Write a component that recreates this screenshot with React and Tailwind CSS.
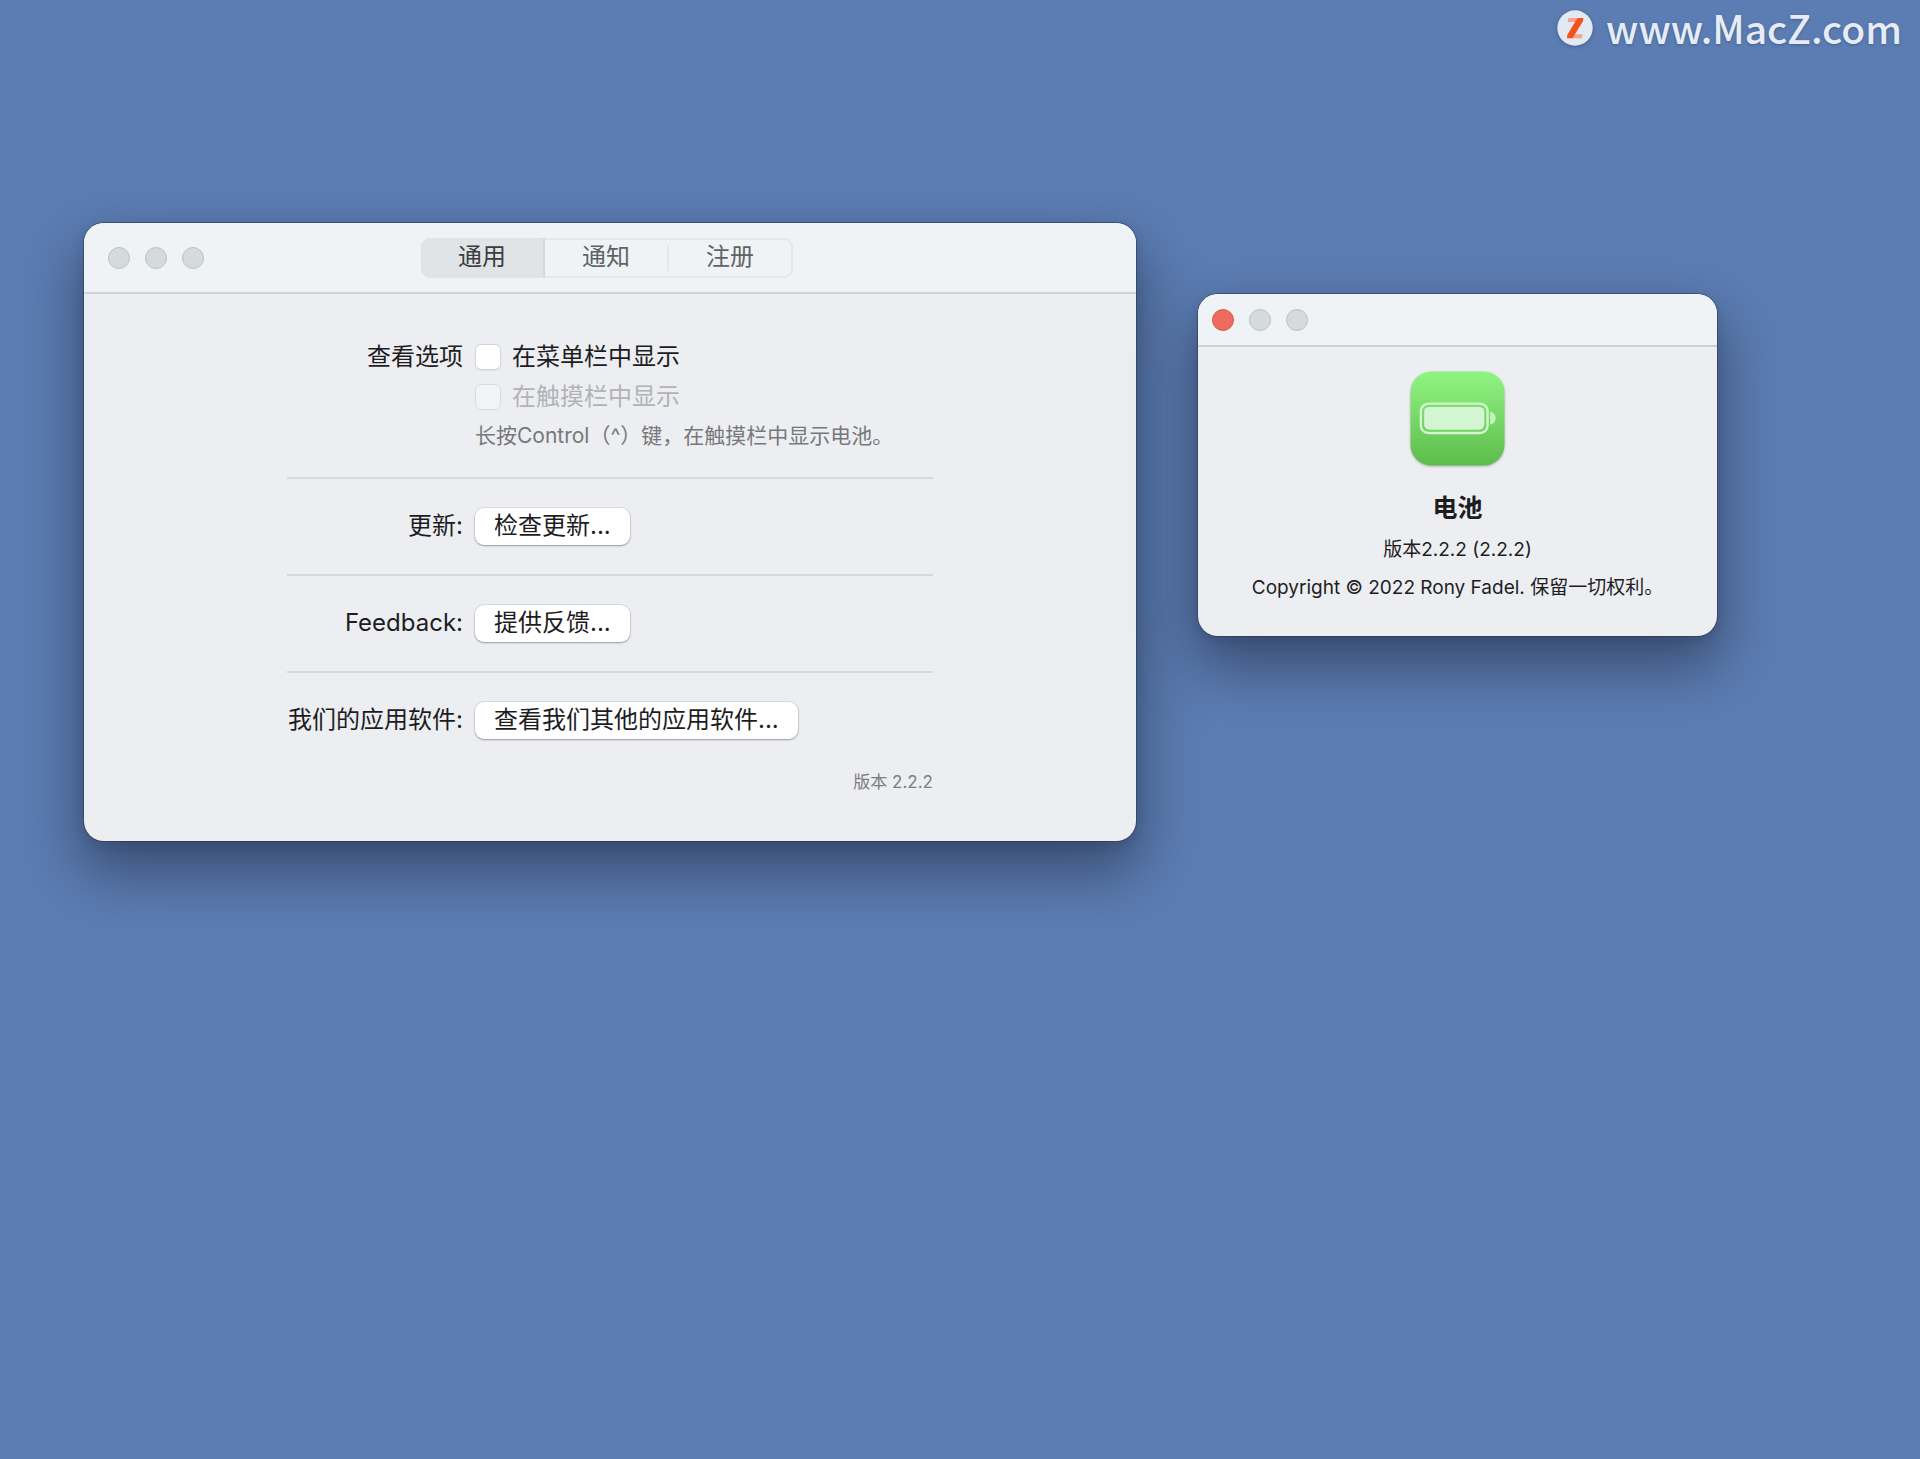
const SHADOW =
  "shadow-[0_0_0_1px_rgba(38,52,84,0.5),0_4px_12px_rgba(20,28,45,0.14),0_28px_58px_4px_rgba(22,30,48,0.5)]";

function Lights({ active }) {
  const dot = "size-[22px] rounded-full border";
  const idle = "border-[#bcc1c4] bg-[#d5dadd]";
  return (
    <div className="flex gap-[15px]">
      <button
        type="button"
        aria-label="关闭"
        className={`${dot} ${active ? "border-[#d95a4f] bg-[#ec6a5e]" : idle}`}
      />
      <button type="button" aria-label="最小化" className={`${dot} ${idle}`} />
      <button type="button" aria-label="缩放" className={`${dot} ${idle}`} />
    </div>
  );
}

function Tabs() {
  return (
    <div
      role="tablist"
      className="flex h-10 rounded-[9px] border-2 border-[#e3e7e9] text-[24px] leading-[34px] text-[#5f6366]"
    >
      <button
        type="button"
        role="tab"
        aria-selected="true"
        className="-my-[2px] -ml-[2px] w-[124px] rounded-l-[9px] border-r-2 border-[#d5d9db] bg-[#e1e4e7] pb-[2px] text-[#3a3d40]"
      >
        通用
      </button>
      <button type="button" role="tab" aria-selected="false" className="w-[122px] pb-[2px]">
        通知
      </button>
      <span className="my-[5px] w-[2px] bg-[#e3e7e9]" />
      <button type="button" role="tab" aria-selected="false" className="w-[122px] pb-[2px]">
        注册
      </button>
    </div>
  );
}

const BOX =
  "size-[26px] shrink-0 appearance-none rounded-[6px] border border-[#d3d4d8]";

function PushButton({ id, children }) {
  return (
    <button
      id={id}
      type="button"
      className="h-[37px] rounded-[9px] bg-white px-[19px] pb-[2px] text-[24px] leading-[34px] text-[#1d1d1f] shadow-[0_0_0_1px_rgba(0,0,0,0.07),0_1px_2px_rgba(0,0,0,0.3)]"
    >
      {children}
    </button>
  );
}

function ActionRow({ id, label, children }) {
  return (
    <div className="flex items-center gap-3 border-t-2 border-[#d6d8dc] py-[29px]">
      <label htmlFor={id} className="w-[176px] shrink-0 pb-[2px] text-right whitespace-nowrap">
        {label}
      </label>
      <PushButton id={id}>{children}</PushButton>
    </div>
  );
}

function PreferencesWindow() {
  return (
    <section
      aria-label="偏好设置"
      className={`mt-[163px] min-w-0 flex-[1052] overflow-hidden rounded-[20px] bg-[#edeef2] ${SHADOW}`}
    >
      <header className="grid h-[71px] grid-cols-[1fr_auto_1fr] items-center border-b-2 border-[#cfd4d8] bg-[#eff3f6] pr-[30px] pl-6">
        <Lights />
        <Tabs />
      </header>
      <div className="mx-auto w-[646px] max-w-full pt-[50px] pb-[47px] text-[24px] leading-[26px] text-[#1d1d1f]">
        <div className="flex gap-3 pb-[29px]">
          <span id="view-options" className="w-[176px] shrink-0 text-right">
            查看选项
          </span>
          <div role="group" aria-labelledby="view-options" className="flex flex-col">
            <label className="flex items-center gap-[11px]">
              <input
                type="checkbox"
                className={`${BOX} bg-white shadow-[0_1px_1px_rgba(0,0,0,0.06)]`}
              />
              在菜单栏中显示
            </label>
            <label className="mt-[14px] flex items-center gap-[11px] text-[#b2b3b7]">
              <input type="checkbox" disabled className={`${BOX} bg-[#f5f6f8] opacity-70`} />
              在触摸栏中显示
            </label>
            <p className="mt-[14px] text-[21px] leading-6 whitespace-nowrap text-[#77787b]">
              长按Control（^）键，在触摸栏中显示电池。
            </p>
          </div>
        </div>
        <ActionRow id="updates" label="更新:">检查更新...</ActionRow>
        <ActionRow id="feedback" label="Feedback:">提供反馈...</ActionRow>
        <ActionRow id="apps" label="我们的应用软件:">查看我们其他的应用软件...</ActionRow>
        <p className="mt-[2px] text-right text-[17px] leading-6 text-[#7c7d80]">版本 2.2.2</p>
      </div>
    </section>
  );
}

function BatteryIcon() {
  return (
    <svg
      viewBox="0 0 96 96"
      className="size-[95px] drop-shadow-[0_1px_1px_rgba(0,0,0,0.25)]"
      role="img"
      aria-label="电池"
    >
      <defs>
        <linearGradient id="green" x1="0" y1="0" x2="0" y2="1">
          <stop offset="0" stopColor="#90f483" />
          <stop offset="1" stopColor="#5dbc4b" />
        </linearGradient>
      </defs>
      <rect x="0.5" y="0.5" width="95" height="95" rx="21" fill="url(#green)" />
      <rect
        x="11"
        y="33"
        width="67.4"
        height="29.6"
        rx="7.5"
        fill="none"
        stroke="#d3f5d2"
        strokeWidth="2.4"
      />
      <rect x="14.3" y="36.3" width="60.8" height="23" rx="5" fill="#d3f5d2" />
      <path d="M81 41.3c3.500 0.600 5.500 3.300 5.500 6.500s-2 5.900-5.500 6.500z" fill="#c8f2c3" />
    </svg>
  );
}

function AboutWindow() {
  return (
    <section
      aria-label="关于电池"
      className={`mt-[234px] min-w-0 flex-[519] overflow-hidden rounded-[20px] bg-[#edeef2] ${SHADOW}`}
    >
      <header className="flex h-[53px] items-center border-b-2 border-[#cfd0d5] bg-[#eff3f6] pl-[14px]">
        <Lights active />
      </header>
      <div className="flex flex-col items-center pt-6 pb-9 text-center text-[19px] leading-6 text-[#1d1d1f]">
        <BatteryIcon />
        <h1 className="mt-[26px] text-[25px] leading-8 font-bold">电池</h1>
        <p className="mt-[14px]">版本2.2.2 (2.2.2)</p>
        <p className="mt-[14px]">Copyright © 2022 Rony Fadel. 保留一切权利。</p>
      </div>
    </section>
  );
}

function Watermark() {
  return (
    <a
      href="#macz"
      className='flex h-[60px] items-start justify-end gap-[13px] pr-[18px] font-["Noto_Sans_CJK_SC",sans-serif] text-[39px] leading-[54px] font-medium text-[#e6ecf6] text-shadow-[0_1px_3px_rgba(30,50,90,0.4)]'
    >
      <svg
        viewBox="0 0 36 36"
        className="mt-[10px] size-9 drop-shadow-[0_1px_2px_rgba(30,50,90,0.4)]"
        aria-hidden="true"
      >
        <circle cx="18" cy="18" r="17.7" fill="#e3e9f3" />
        <path d="M11.500 8h9l-2 4H10.800z" fill="#f6a48d" />
        <path d="M17.500 24.200h8.300l-0.800 4H14.500z" fill="#f6a48d" />
        <path d="M20.500 8h5.900l-0.500 3.200L15.500 28.200H10l0.400-3.400z" fill="#f4511e" />
      </svg>
      <span>www.MacZ.com</span>
    </a>
  );
}

export default function App() {
  return (
    <div className='min-h-screen bg-[#5c7db3] font-["Inter","Noto_Sans_CJK_SC",sans-serif]'>
      <Watermark />
      <main className="flex items-start gap-[62px] pr-[203px] pl-[84px]">
        <PreferencesWindow />
        <AboutWindow />
      </main>
    </div>
  );
}
